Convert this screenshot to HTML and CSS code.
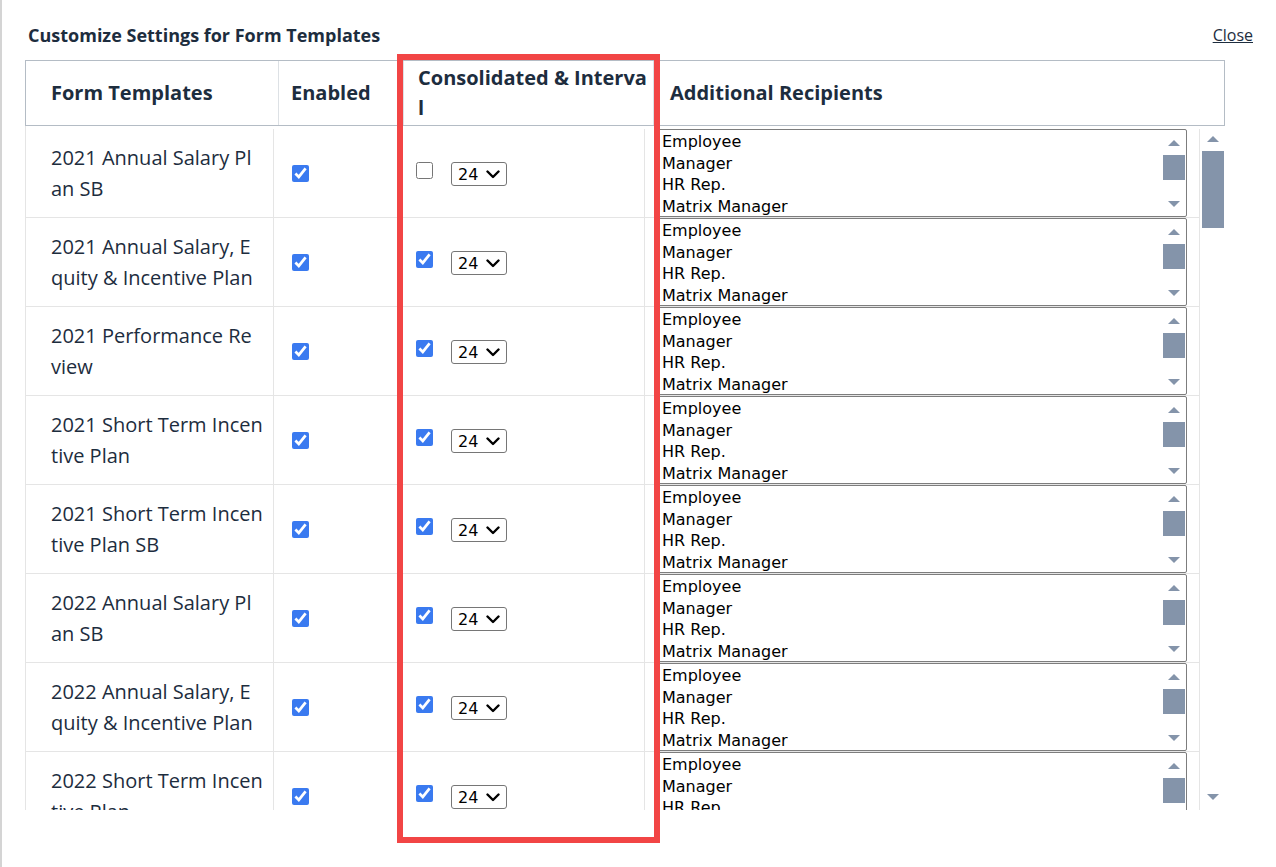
FILE: index.html
```html
<!DOCTYPE html>
<html lang="en">
  <head>
    <meta charset="UTF-8" />
    <meta name="viewport" content="width=device-width, initial-scale=1.0" />
    <title>Customize Settings for Form Templates</title>
    <link rel="stylesheet" href="styles.css">
  </head>
  <body>
    <div class="dialog">
      <div class="dialog-head">
        <h2 class="dialog-title">Customize Settings for Form Templates</h2>
        <a href="#" class="close-link">Close</a>
      </div>

      <div class="tpl-table">
        <div class="tpl-head">
          <div class="th th-name">Form Templates</div>
          <div class="th">Enabled</div>
          <div class="th th-consol"><span>Consolidated &amp; Interva<br>l</span></div>
          <div class="th th-recip">Additional Recipients</div>
        </div>
        <div class="tpl-body">
          <div class="tpl-rows" id="rows"></div>
          <div class="vscroll">
            <div class="sb-btn"><span class="arrow-up"></span></div>
            <div class="sb-track"><div class="sb-thumb big"></div></div>
            <div class="sb-btn"><span class="arrow-down"></span></div>
          </div>
        </div>
      </div>

      <div class="highlight"></div>
    </div>

    <script>
      const templates = [
        { name: ["2021 Annual Salary Pl", "an SB"], enabled: true, consolidated: false },
        { name: ["2021 Annual Salary, E", "quity & Incentive Plan"], enabled: true, consolidated: true },
        { name: ["2021 Performance Re", "view"], enabled: true, consolidated: true },
        { name: ["2021 Short Term Incen", "tive Plan"], enabled: true, consolidated: true },
        { name: ["2021 Short Term Incen", "tive Plan SB"], enabled: true, consolidated: true },
        { name: ["2022 Annual Salary Pl", "an SB"], enabled: true, consolidated: true },
        { name: ["2022 Annual Salary, E", "quity & Incentive Plan"], enabled: true, consolidated: true },
        { name: ["2022 Short Term Incen", "tive Plan"], enabled: true, consolidated: true }
      ];
      const recipients = ["Employee", "Manager", "HR Rep.", "Matrix Manager"];

      const esc = (s) => s.replace(/&/g, "&amp;");
      const chevron =
        '<svg class="chevron" width="14" height="9" viewBox="0 0 14 9"><path d="M1.5 1.5 L7 7 L12.5 1.5" fill="none" stroke="#000" stroke-width="2.4" stroke-linecap="round" stroke-linejoin="round"/></svg>';

      const rows = document.getElementById("rows");
      templates.forEach((t) => {
        const opts = recipients.map((r) => `<div class="lb-item">${r}</div>`).join("");
        const row = document.createElement("div");
        row.className = "tr";
        row.innerHTML = `
          <div class="td td-name"><span>${t.name.map(esc).join("<br>")}</span></div>
          <div class="td td-check"><input type="checkbox" ${t.enabled ? "checked" : ""}></div>
          <div class="td td-consol">
            <input type="checkbox" ${t.consolidated ? "checked" : ""}>
            <span class="select-wrap">
              <select class="interval"><option>24</option><option>12</option><option>48</option></select>
              ${chevron}
            </span>
          </div>
          <div class="td td-recip">
            <div class="listbox">
              <div class="lb-items">${opts}</div>
              <div class="lb-scroll">
                <div class="sb-btn"><span class="arrow-up"></span></div>
                <div class="sb-track"><div class="sb-thumb"></div></div>
                <div class="sb-btn"><span class="arrow-down"></span></div>
              </div>
            </div>
          </div>`;
        rows.appendChild(row);
      });
    </script>
  </body>
</html>
```

FILE: styles.css
```css
* {
  box-sizing: border-box;
}
body {
  margin: 0;
  background: #fff;
  color: #1d2d3e;
  font-family: "Open Sans", Arial, sans-serif;
}
.dialog {
  position: relative;
  height: 867px;
  border-left: 2px solid #d4d4d4;
  padding: 0 23px;
}
.dialog-head {
  display: flex;
  justify-content: space-between;
  align-items: center;
  height: 60px;
  padding: 10px 0 0 3px;
}
.dialog-title {
  margin: 0;
  font-size: 18px;
  font-weight: 700;
}
.close-link {
  font-size: 16px;
  color: #1d2d3e;
  text-decoration: underline;
}

.tpl-table {
  width: 1200px;
}
.tpl-head {
  display: grid;
  grid-template-columns: 253px 125px 250px 1fr;
  height: 66px;
  border: 1px solid #b4bcc5;
}
.th {
  display: flex;
  align-items: center;
  padding: 0 12px;
  border-right: 1px solid #dde1e5;
  font-size: 20px;
  font-weight: 700;
  line-height: 30px;
  white-space: nowrap;
}
.th:last-child {
  border-right: none;
}
.th-name {
  padding-left: 25px;
}
.th-consol {
  padding-left: 14px;
  align-items: flex-start;
  padding-top: 2px;
}
.th-recip {
  padding-left: 16px;
}

.tpl-body {
  display: flex;
  height: 684px;
  overflow: hidden;
}
.tpl-rows {
  width: 1175px;
  padding-top: 3px;
  border-left: 1px solid #e5e5e5;
}
.tr {
  display: grid;
  grid-template-columns: 248px 124px 247px 555px;
  height: 89px;
  border-bottom: 1px solid #e5e5e5;
}
.td {
  display: flex;
  align-items: center;
  border-right: 1px solid #e5e5e5;
}
.td-name {
  padding: 0 12px 0 25px;
  font-size: 20px;
  line-height: 31px;
  white-space: nowrap;
}
.td-check {
  padding-left: 18px;
}
.td-consol {
  align-items: flex-start;
  padding: 33px 0 0 18px;
}
input[type="checkbox"] {
  width: 17px;
  height: 17px;
  margin: 0;
  accent-color: #3a7af0;
}

.select-wrap {
  position: relative;
  display: inline-block;
  margin: 0 0 0 18px;
}
.interval {
  appearance: none;
  width: 56px;
  height: 24px;
  padding: 0 0 0 6px;
  border: 1px solid #767676;
  border-radius: 3px;
  background: #fff;
  font-family: "DejaVu Sans", sans-serif;
  font-size: 16px;
  color: #000;
}
.chevron {
  position: absolute;
  left: 35px;
  top: 8px;
  pointer-events: none;
}
.td-recip {
  align-items: flex-start;
  padding: 0 12px 0 13px;
}

.listbox {
  display: flex;
  width: 100%;
  height: 88px;
  border: 1px solid #7d7d7d;
  border-radius: 2px;
  font-family: "DejaVu Sans", sans-serif;
  font-size: 16px;
  color: #000;
}
.lb-items {
  flex: 1;
  padding: 1px 0 0 3px;
}
.lb-item {
  height: 21.5px;
  line-height: 21.5px;
  white-space: nowrap;
}
.lb-scroll {
  display: flex;
  flex-direction: column;
  width: 23px;
  padding-right: 1px;
}

.sb-btn {
  display: flex;
  justify-content: center;
  align-items: center;
  height: 25px;
  flex-shrink: 0;
}
.sb-track {
  flex: 1;
}
.sb-thumb {
  height: 25px;
  background: #8494aa;
}
.arrow-up,
.arrow-down {
  width: 0;
  height: 0;
  border-left: 6px solid transparent;
  border-right: 6px solid transparent;
}
.arrow-up {
  border-bottom: 6px solid #8494aa;
}
.arrow-down {
  border-top: 6px solid #8494aa;
}

.vscroll {
  display: flex;
  flex-direction: column;
  width: 25px;
  padding-left: 2px;
  padding-bottom: 1px;
}
.vscroll .sb-btn {
  padding-right: 1px;
}
.sb-thumb.big {
  height: 77px;
  width: 22px;
}

.highlight {
  position: absolute;
  left: 395px;
  top: 54px;
  width: 263px;
  height: 789px;
  border: 6px solid #f24545;
  pointer-events: none;
}
```
